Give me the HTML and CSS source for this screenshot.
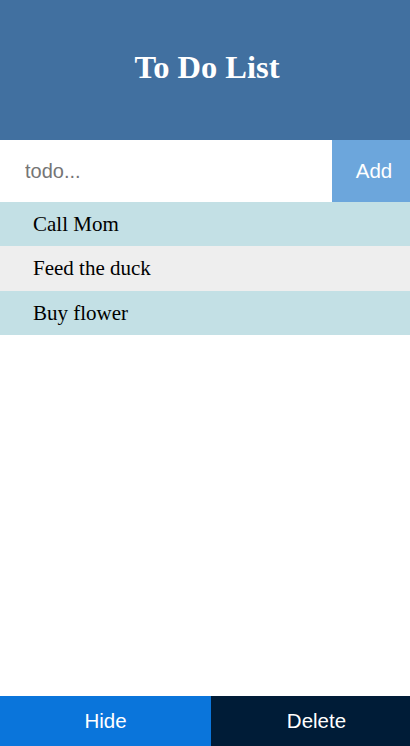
FILE: index.html
```html
<!DOCTYPE html>
<html>
<head>
<meta charset="utf-8">
<link rel="stylesheet" href="styles.css">
</head>
<body>
<div class="app">
  <header class="header"><h1 class="title">To Do List</h1></header>
  <form class="add-row">
    <input class="todo-input" type="text" placeholder="todo...">
    <button class="add-btn" type="button">Add</button>
  </form>
  <ul class="list">
    <li class="item">Call Mom</li>
    <li class="item alt">Feed the duck</li>
    <li class="item">Buy flower</li>
  </ul>
  <footer class="footer">
    <button class="foot-btn hide">Hide</button>
    <button class="foot-btn del">Delete</button>
  </footer>
</div>
</body>
</html>
```
FILE: styles.css
```css
html, body { margin: 0; padding: 0; height: 100%; }
body { font-family: "Liberation Serif", serif; background: #fff; overflow: hidden; }
.app { display: flex; flex-direction: column; height: 746px; }
.header { height: 140px; box-sizing: border-box; padding-bottom: 6px; padding-left: 4px; flex-shrink: 0; background: #4170a0; display: flex; align-items: center; justify-content: center; }
.title { margin: 0; color: #fff; font-size: 32.5px; font-weight: bold; font-family: "Liberation Serif", serif; }
.add-row { display: flex; height: 62px; margin: 0; flex-shrink: 0; }
.todo-input { flex: 1; border: none; outline: none; padding: 0 0 0 25px; font-family: "Liberation Sans", Arial, sans-serif; font-size: 20px; color: #333; min-width: 0; }
.todo-input::placeholder { color: #757575; }
.add-btn { width: 78px; flex-shrink: 0; border: none; background: #6ca6dc; color: #fff; font-family: "Liberation Sans", Arial, sans-serif; font-size: 20.5px; padding: 0 0 0 6px; }
.list { list-style: none; margin: 0; padding: 0; flex: 1; }
.item { height: 44px; line-height: 44px; padding-left: 33px; font-size: 21px; background: #c3e0e5; color: #000; }
.item.alt { background: #eeeeee; height: 45px; line-height: 45px; }
.footer { display: flex; height: 50px; flex-shrink: 0; overflow: hidden; }
.foot-btn { width: 211px; flex-shrink: 0; border: none; color: #fff; font-family: "Liberation Sans", Arial, sans-serif; font-size: 20.5px; padding: 0; }
.hide { background: #0a75db; }
.del { background: #001c37; }
```
